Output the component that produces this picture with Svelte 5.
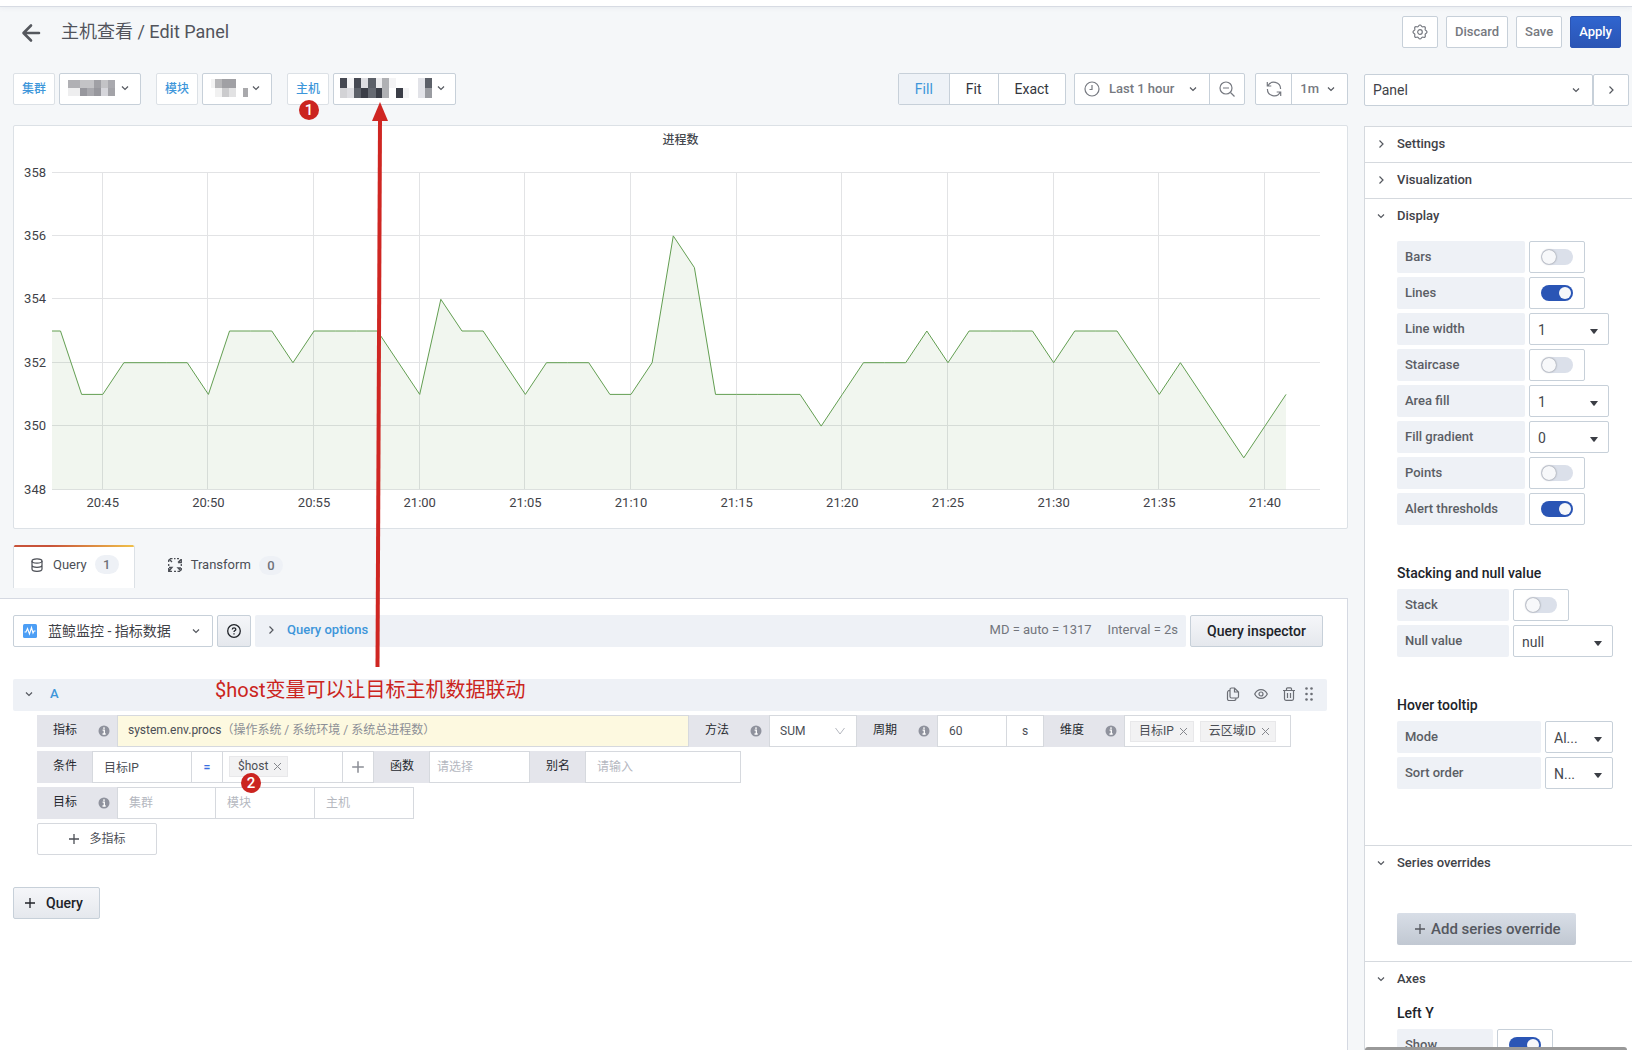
<script>
  const values = [
    353, 351, 351, 352, 352, 352, 352, 351, 353, 353, 353, 352, 353, 353, 353, 353, 352, 351, 354, 353, 353, 352, 351,
    352, 352, 352, 351, 351, 352, 356, 355, 351, 351, 351, 351, 351, 350, 351, 352, 352, 352, 353, 352, 353, 353, 353,
    353, 352, 353, 353, 353, 352, 351, 352, 351, 350, 349, 350, 351,
  ];
  const times = ['20:45', '20:50', '20:55', '21:00', '21:05', '21:10', '21:15', '21:20', '21:25', '21:30', '21:35', '21:40'];
  const ticks = [358, 356, 354, 352, 350, 348];
  const minute = 21.13;
  const xAt = (m) => 46.5 + m * minute;
  const yAt = (v) => 335.5 - (v - 348) * 31.7;
  const line = '38,' + yAt(353) + ' ' + values.map((v, i) => xAt(i) + ',' + yAt(v)).join(' ');
  const area = '38,335.5 ' + line + ' ' + xAt(values.length - 1) + ',335.5';

  // Redacted values: [x, y, width, height, colour]
  const maskCluster = [
    [0, 1, 12, 8, '#b0b0b4'], [12, 1, 14, 8, '#c3c3c6'], [26, 1, 7, 8, '#a0a0a5'], [33, 1, 7, 8, '#c3c3c6'], [40, 1, 7, 8, '#a9a9ae'],
    [0, 9, 12, 8, '#eeeeef'], [12, 9, 7, 8, '#97979d'], [19, 9, 7, 8, '#a9a9ae'], [26, 9, 7, 8, '#97979d'], [33, 9, 7, 8, '#d6d6db'], [40, 9, 7, 8, '#a3a3a8'],
  ];
  const maskModule = [
    [0, 0, 4, 9, '#f3f3f3'], [4, 0, 7, 9, '#b7b7b9'], [11, 0, 14, 9, '#a0a0a4'],
    [4, 9, 7, 9, '#f1f1f1'], [11, 9, 7, 9, '#cbcbcd'], [18, 9, 7, 9, '#e2e2e3'], [32, 9, 5, 9, '#a9a9ac'],
  ];
  const maskHost = [
    [0, 0, 7, 10, '#464952'], [7, 0, 7, 10, '#f4f4f5'], [14, 0, 7, 10, '#464952'], [21, 0, 7, 10, '#dedee2'], [28, 0, 8, 10, '#5c6068'],
    [36, 0, 6, 10, '#ececee'], [42, 0, 7, 10, '#b0b1b4'], [49, 0, 7, 10, '#f4f4f5'], [78, 0, 7, 10, '#e2e3e8'], [85, 0, 7, 10, '#5c6068'],
    [0, 10, 7, 10, '#d3d3d6'], [7, 10, 7, 10, '#dedee2'], [14, 10, 7, 10, '#5c6068'], [21, 10, 7, 10, '#3b3e47'], [28, 10, 8, 10, '#666a72'],
    [36, 10, 6, 10, '#3b3e47'], [42, 10, 7, 10, '#b0b1b4'], [56, 10, 7, 10, '#3b3e47'], [63, 10, 6, 10, '#f4f4f5'], [78, 10, 7, 10, '#e2e3e8'], [85, 10, 7, 10, '#9a9ca1'],
  ];
  const display = [
    { label: 'Bars', on: false },
    { label: 'Lines', on: true },
    { label: 'Line width', value: '1' },
    { label: 'Staircase', on: false },
    { label: 'Area fill', value: '1' },
    { label: 'Fill gradient', value: '0' },
    { label: 'Points', on: false },
    { label: 'Alert thresholds', on: true },
  ];
  const stacking = [{ label: 'Stack', on: false }, { label: 'Null value', value: 'null' }];
  const hover = [{ label: 'Mode', value: 'Al...' }, { label: 'Sort order', value: 'N...' }];
  const axes = [{ label: 'Show', on: true }];
</script>

{#snippet down()}
  <svg class="chev" width="10" height="10" viewBox="0 0 10 10"><path d="M2 3.5 5 6.5 8 3.5" /></svg>
{/snippet}
{#snippet right()}
  <svg class="chev" width="10" height="10" viewBox="0 0 10 10"><path d="M3.5 1.5 7 5 3.5 8.5" /></svg>
{/snippet}
{#snippet plus(size)}
  <svg width={size} height={size} viewBox="0 0 12 12" fill="none" stroke="currentColor" stroke-width="1.3"><path d="M6 1v10M1 6h10" /></svg>
{/snippet}
{#snippet cross()}
  <svg width="9" height="9" viewBox="0 0 9 9" fill="none" stroke="#85878d"><path d="M1 1l7 7M8 1 1 8" /></svg>
{/snippet}
{#snippet info()}
  <svg class="info" width="12" height="12" viewBox="0 0 12 12"><circle cx="6" cy="6" r="5.5" fill="#8f929d" /><path d="M6 2.2v1.7M4.6 5.2H6.3V8.8M4.5 9h3.2" fill="none" stroke="#fff" stroke-width="1.3" /></svg>
{/snippet}
{#snippet mask(cells, w, h)}
  <svg width={w} height={h} viewBox="0 0 {w} {h}" shape-rendering="crispEdges">
    {#each cells as c}<rect x={c[0]} y={c[1]} width={c[2]} height={c[3]} fill={c[4]} />{/each}
  </svg>
{/snippet}
{#snippet fields(items, kind)}
  <div class="fields {kind}">
    {#each items as f}
      {@const id = kind + '-' + f.label.replaceAll(' ', '-')}
      <div class="field">
        <label for={id}>{f.label}</label>
        {#if f.value}
          <div class="pick">
            <select {id}><option>{f.value}</option></select>
            <svg width="8" height="5" viewBox="0 0 8 5"><path d="M0 0h8L4.6 4.4a.8.8 0 0 1-1.2 0z" fill="#3b3e45" /></svg>
          </div>
        {:else}
          <div class="switch"><input type="checkbox" {id} checked={f.on} /></div>
        {/if}
      </div>
    {/each}
  </div>
{/snippet}

<div class="page">
  <div class="strip"></div>
  <header class="top">
    <button class="back" aria-label="Back">
      <svg width="20" height="20" viewBox="0 0 20 20" fill="none" stroke="#55585e" stroke-width="2.6" stroke-linecap="round" stroke-linejoin="round"><path d="M18 10H3M10 2.500 2.500 10 10 17.500" /></svg>
    </button>
    <h1>主机查看 / Edit Panel</h1>
    <div class="actions">
      <button class="btn gear" aria-label="Panel settings">
        <svg width="16" height="16" viewBox="0 0 16 16" fill="none" stroke="currentColor" stroke-width="1.2" stroke-linejoin="round"><path d="M8 1c1.300 0 1.400 1.500 2.200 1.800.9.300 1.900-.7 2.800.2.900.9-.1 1.900.2 2.800.300.8 1.800.9 1.800 2.200s-1.500 1.400-1.800 2.200c-.3.900.7 1.900-.2 2.800-.9.900-1.900-.1-2.800.2C9.400 13.500 9.300 15 8 15s-1.400-1.500-2.200-1.800c-.9-.3-1.900.7-2.800-.2-.9-.9.1-1.900-.2-2.800C2.500 9.400 1 9.300 1 8s1.500-1.400 1.800-2.200c.3-.9-.7-1.900.2-2.800.9-.9 1.900.1 2.800-.2C6.600 2.500 6.700 1 8 1z" /><circle cx="8" cy="8" r="2.300" /></svg>
      </button>
      <button class="btn">Discard</button>
      <button class="btn">Save</button>
      <button class="btn primary">Apply</button>
    </div>
  </header>

  <div class="body">
    <main>
      <div class="toolbar">
        <div class="var"><span class="name">集群</span><button class="btn dark" aria-label="集群">{@render mask(maskCluster, 47, 18)}{@render down()}</button></div>
        <div class="var"><span class="name">模块</span><button class="btn dark module" aria-label="模块">{@render mask(maskModule, 37, 18)}{@render down()}</button></div>
        <div class="var"><span class="name">主机<i class="dot">1</i></span><button class="btn dark host" aria-label="主机">{@render mask(maskHost, 92, 20)}{@render down()}</button></div>
        <div class="group size">
          <button class="on">Fill</button><button>Fit</button><button>Exact</button>
        </div>
        <div class="group time">
          <button class="range">
            <svg width="16" height="16" viewBox="0 0 16 16" fill="none" stroke="currentColor" stroke-width="1.2"><circle cx="8" cy="8" r="7" /><path d="M8 4v4.500H5.500" /></svg>
            <span>Last 1 hour</span>{@render down()}
          </button><button class="icon" aria-label="Zoom out">
            <svg width="16" height="16" viewBox="0 0 16 16" fill="none" stroke="currentColor" stroke-width="1.2"><circle cx="7" cy="7" r="6" /><path d="M4 7h6M11.500 11.500l4 4" /></svg>
          </button>
        </div>
        <div class="group refresh">
          <button class="icon" aria-label="Refresh">
            <svg width="16" height="16" viewBox="0 0 16 16" fill="none" stroke="currentColor" stroke-width="1.200"><path d="M1.300 1v4h4M14.700 15v-4h-4M1.700 5A6.800 6.800 0 0 1 14.600 8M14.300 11A6.800 6.800 0 0 1 1.400 8" /></svg>
          </button><button class="every"><span>1m</span>{@render down()}</button>
        </div>
      </div>

      <section class="chart">
        <h2>进程数</h2>
        <svg viewBox="0 0 1333 374">
          <g class="grid">
            {#each ticks as t}<line x1="38" x2="1306" y1={Math.round(yAt(t)) - 0.5} y2={Math.round(yAt(t)) - 0.5} />{/each}
            {#each times as t, i}<line x1={Math.round(xAt(2 + i * 5)) - 0.5} x2={Math.round(xAt(2 + i * 5)) - 0.5} y1="18" y2="335" />{/each}
          </g>
          <polygon points={area} fill="#629e51" fill-opacity="0.09" />
          <polyline points={line} fill="none" stroke="#629e51" />
          {#each ticks as t}<text x="32" y={yAt(t) + 4} text-anchor="end">{t}</text>{/each}
          {#each times as t, i}<text x={xAt(2 + i * 5)} y="353" text-anchor="middle">{t}</text>{/each}
        </svg>
      </section>

      <nav class="tabs">
        <button class="tab active">
          <svg width="14" height="14" viewBox="0 0 14 14" fill="none" stroke="currentColor" stroke-width="1.200"><ellipse cx="7" cy="3" rx="5" ry="2.200" /><path d="M2 3v8c0 1.300 2.200 2.300 5 2.300s5-1 5-2.300V3M2 7c0 1.300 2.200 2.300 5 2.300S12 8.300 12 7" /></svg>
          <span>Query</span><b>1</b>
        </button>
        <button class="tab">
          <svg width="14" height="14" viewBox="0 0 14 14" fill="none" stroke="currentColor" stroke-width="1.300"><path d="M.7 4V1.700M4.500.7H2M1 1l3 3M9 .7h2M13.300 1v3.500H10M13 1.500 10 4.500M.7 10v3.300H4M1 13l3-3.500H1M13.300 10v2.300M9.500 13.300H12M13 13l-3-3h3M.7 6v2M6 .7h1.500M6 13.300h2M13.300 6v2" /></svg>
          <span>Transform</span><b>0</b>
        </button>
      </nav>

      <section class="query">
        <div class="source">
          <button class="btn ds">
            <svg width="14" height="14" viewBox="0 0 14 14"><rect width="14" height="14" rx="1.500" fill="#4c9ef5" /><path d="M1.500 8H3l1.500-3.500L6.500 10l2-6.500L10 9l1-2h1.500" fill="none" stroke="#fff" stroke-width="1.100" /></svg>
            <span>蓝鲸监控 - 指标数据</span>{@render down()}
          </button>
          <button class="btn soft help" aria-label="Help">
            <svg width="14" height="14" viewBox="0 0 14 14" fill="none" stroke="currentColor" stroke-width="1.300"><circle cx="7" cy="7" r="6.300" /><path d="M5.300 5.600c0-2.300 3.500-2.200 3.500-.2C8.800 6.600 7 6.600 7 8M7 9.200v1.300" /></svg>
          </button>
          <div class="options">
            {@render right()}
            <button class="link">Query options</button>
            <span class="meta">MD = auto = 1317</span>
            <span>Interval = 2s</span>
          </div>
          <button class="btn soft inspect">Query inspector</button>
        </div>

        <div class="rowhead">
          {@render down()}
          <span class="ref">A</span>
          <div class="tools">
            <button aria-label="Duplicate"><svg width="14" height="14" viewBox="0 0 14 14" fill="none" stroke="currentColor" stroke-width="1.200"><path d="M8.500 1H5.500A1.500 1.500 0 0 0 4 2.500v7A1.500 1.500 0 0 0 5.500 11h5.500A1.500 1.500 0 0 0 12.500 9.500V5zM8.500 1v4h4M4 3.500A2 2 0 0 0 1.500 5.500V12a1.500 1.500 0 0 0 1.500 1.500H8a2 2 0 0 0 2-2" /></svg></button>
            <button aria-label="Toggle visibility"><svg width="14" height="14" viewBox="0 0 14 14" fill="none" stroke="currentColor" stroke-width="1.200"><path d="M.7 7C3.500 1.200 10.500 1.200 13.300 7 10.500 12.800 3.500 12.800.7 7z" /><circle cx="7" cy="7" r="2" /></svg></button>
            <button aria-label="Delete"><svg width="14" height="14" viewBox="0 0 14 14" fill="none" stroke="currentColor" stroke-width="1.200"><path d="M1 3.500h12M4.500 3.500V1.800q0-1 1-1h3q1 0 1 1v1.700M2.500 3.500v8.300q0 1.500 1.500 1.500h6q1.500 0 1.500-1.500V3.500M5.500 6v5M8.500 6v5" /></svg></button>
            <button aria-label="Move"><svg width="10" height="14" viewBox="0 0 10 14" fill="currentColor"><circle cx="2.500" cy="1.500" r="1.300" /><circle cx="7.500" cy="1.500" r="1.300" /><circle cx="2.500" cy="7" r="1.300" /><circle cx="7.500" cy="7" r="1.300" /><circle cx="2.500" cy="12.500" r="1.300" /><circle cx="7.500" cy="12.500" r="1.300" /></svg></button>
          </div>
        </div>

        <div class="lines">
          <div class="line">
            <span class="cap wide">指标{@render info()}</span>
            <div class="cell metric"><span>system.env.procs</span><em>（操作系统 / 系统环境 / 系统总进程数）</em></div>
            <label class="cap wide" for="method">方法{@render info()}</label>
            <div class="cell method">
              <select id="method"><option>SUM</option></select>
              <svg width="10" height="8" viewBox="0 0 10 8" fill="none" stroke="#b4b7bf"><path d="M.5 1 5 7 9.500 1" /></svg>
            </div>
            <label class="cap wide" for="period">周期{@render info()}</label>
            <input class="cell period" id="period" value="60" />
            <span class="cell unit">s</span>
            <span class="cap wide">维度{@render info()}</span>
            <div class="cell dims">
              <span class="tag">目标IP {@render cross()}</span>
              <span class="tag">云区域ID {@render cross()}</span>
            </div>
          </div>
          <div class="line">
            <label class="cap" for="cond">条件</label>
            <input class="cell first" id="cond" value="目标IP" />
            <button class="cell eq">=</button>
            <div class="cell cond"><span class="tag">$host {@render cross()}<i class="dot">2</i></span></div>
            <button class="cell add" aria-label="添加条件">{@render plus(14)}</button>
            <label class="cap" for="fn">函数</label>
            <input class="cell fn" id="fn" placeholder="请选择" />
            <label class="cap" for="alias">别名</label>
            <input class="cell alias" id="alias" placeholder="请输入" />
          </div>
          <div class="line">
            <label class="cap wide" for="t1">目标{@render info()}</label>
            <input class="cell mid" id="t1" placeholder="集群" />
            <input class="cell mid" placeholder="模块" aria-label="模块" />
            <input class="cell mid" placeholder="主机" aria-label="主机" />
          </div>
          <button class="btn more">{@render plus(12)}多指标</button>
        </div>
        <button class="btn soft addq">{@render plus(12)}Query</button>
      </section>
    </main>

    <aside>
      <div class="panelpick">
        <button class="btn what"><span>Panel</span>{@render down()}</button>
        <button class="btn go" aria-label="Collapse">{@render right()}</button>
      </div>
      <div class="groups">
        <section><button class="head">{@render right()}Settings</button></section>
        <section><button class="head">{@render right()}Visualization</button></section>
        <section class="open">
          <button class="head">{@render down()}Display</button>
          {@render fields(display, 'display')}
          <h3>Stacking and null value</h3>
          {@render fields(stacking, 'stacking')}
          <h3>Hover tooltip</h3>
          {@render fields(hover, 'hover')}
        </section>
        <section class="over">
          <button class="head">{@render down()}Series overrides</button>
          <button class="btn series">{@render plus(12)}Add series override</button>
        </section>
        <section>
          <button class="head">{@render down()}Axes</button>
          <h3 class="lead">Left Y</h3>
          {@render fields(axes, 'axes')}
        </section>
      </div>
      <div class="scroll"></div>
    </aside>
  </div>

  <svg class="arrow" width="24" height="566" viewBox="0 0 24 566">
    <path d="M14 18 11.500 565" stroke="#cf2622" stroke-width="4" /><path d="M14 0 22 19H6z" fill="#cf2622" />
  </svg>
  <p class="note">$host变量可以让目标主机数据联动</p>
</div>

<style>
  :global(body) { background: #f5f7f9; }
  .page, .page * { box-sizing: border-box; }
  .page {
    position: relative;
    display: flex;
    flex-direction: column;
    height: 100vh;
    overflow: hidden;
    font: 13px/20px Roboto, "Noto Sans CJK SC", sans-serif;
    color: #45484e;
    background: #f5f7f9;
  }
  button, input, select { font: inherit; color: inherit; margin: 0; }
  button { display: flex; align-items: center; padding: 0; border: 0; background: none; white-space: nowrap; }
  svg { display: block; flex: none; }
  h1, h2, h3, p { margin: 0; }
  .chev { fill: none; stroke: #55585f; stroke-width: 1.2; }
  .strip { flex: none; height: 7px; background: #fff; border-bottom: 1px solid #d7dbe3; box-shadow: 0 1px 4px #d7dbe366; }

  .top { flex: none; display: flex; align-items: center; height: 50px; padding: 0 11px 0 21px; }
  .back { padding-top: 2px; }
  h1 { margin-left: 20px; font-size: 18px; line-height: 24px; font-weight: 400; color: #52545c; }
  .actions { display: flex; gap: 8px; margin-left: auto; }
  .btn {
    height: 32px;
    padding: 0 8px;
    border: 1px solid #c7d0d9;
    border-radius: 2px;
    background: #fff;
    font-weight: 500;
    color: #767980;
  }
  .gear { width: 36px; justify-content: center; padding: 0; }
  .primary { border-color: #2b55b5; background: linear-gradient(#3065cf, #2b55b5); color: #fff; }

  .body { flex: 1; display: flex; gap: 16px; min-height: 0; }
  main { flex: 1; display: flex; flex-direction: column; min-width: 0; }
  .toolbar { display: flex; padding: 16px 0 0 13px; }
  .var { display: flex; gap: 4px; margin-right: 15px; }
  .name {
    position: relative;
    height: 32px;
    padding: 0 8px;
    border: 1px solid #dce1e6;
    border-radius: 2px;
    background: #fff;
    font-size: 12px;
    line-height: 30px;
    font-weight: 500;
    color: #3d96da;
  }
  .dot {
    position: absolute;
    left: 11px;
    top: 26px;
    width: 20px;
    height: 20px;
    border-radius: 50%;
    background: #cb2420;
    color: #fff;
    font: 500 15px/20px Roboto, sans-serif;
    text-align: center;
  }
  .dark { gap: 5px; padding: 0 10px 3px 8px; }
  .module { gap: 3px; }
  .host { gap: 4px; padding: 0 9px 3px 6px; }
  .group { display: flex; height: 32px; border: 1px solid #c7d0d9; border-radius: 2px; background: #fff; color: #767980; font-weight: 500; }
  .group button { height: 30px; }
  .group button + button { border-left: 1px solid #c7d0d9; }
  .size { margin: 0 8px 0 auto; color: #33363d; font-size: 14px; font-weight: 400; }
  .size button { padding: 0 16px; }
  .size .on { background: #eef2f7; color: #3d96da; }
  .time { margin-right: 10px; }
  .range { gap: 9px; padding: 0 11px 0 9px; }
  .range .chev { margin-left: 5px; }
  .icon { width: 35px; justify-content: center; }
  .every { gap: 7px; padding: 0 11px 0 8px; }

  .chart { margin: 20px 0 0 13px; border: 1px solid #dce1e6; border-radius: 2px; background: #fff; }
  h2 { height: 28px; font-size: 12px; line-height: 28px; font-weight: 500; text-align: center; }
  .chart svg { width: 100%; height: auto; }
  .grid line { stroke: #e2e3e5; }
  .chart text { font-size: 13px; fill: #3f4248; }

  .tabs { display: flex; margin: 16px 0 10px 13px; }
  .tab { height: 43px; padding: 1px 16px 4px; border: 1px solid transparent; color: #4b4e55; }
  .tab span { margin: 0 8px 0 9px; }
  .tab b { width: 24px; height: 19px; border-radius: 10px; background: #eef1f6; font-weight: 500; line-height: 19px; color: #70737a; }
  .tab.active {
    margin-right: 16px;
    padding: 0 15px 4px 16px;
    border: solid #dce1e6;
    border-width: 0 1px;
    border-radius: 2px 2px 0 0;
    background: linear-gradient(90deg, #c8533a 30%, #f0c04a) top / 100% 2px no-repeat, #fff;
  }

  .query { flex: 1; min-height: 0; padding: 16px 20px 0 13px; border: 1px solid #d5d9e2; border-width: 1px 1px 0 0; background: #fff; }
  .source { display: flex; gap: 4px; padding-right: 4px; }
  .ds { width: 200px; padding: 0 11px 0 9px; font-size: 14px; font-weight: 400; color: #3f4248; }
  .ds span { margin: 0 auto 0 11px; }
  .soft { background: linear-gradient(#f5f6f9, #e5e8ed); color: #202329; }
  .help { width: 34px; justify-content: center; }
  .options { flex: 1; display: flex; align-items: center; padding: 0 8px 3px 11px; border-radius: 2px; background: #eef1f6; color: #72757c; }
  .link { margin-left: 11px; color: #3d96da; font-weight: 500; }
  .meta { margin: 0 16px 0 auto; }
  .inspect { padding: 0 16px; font-size: 14px; }

  .rowhead { display: flex; align-items: center; height: 32px; margin-top: 32px; padding: 0 13px 2px 11px; border-radius: 2px; background: #eef1f6; }
  .ref { margin-left: 16px; color: #3d96da; font-weight: 500; }
  .tools { display: flex; gap: 14px; margin-left: auto; color: #6c6f76; }
  .tools button:last-child { margin-left: -6px; }

  .lines { display: flex; flex-direction: column; align-items: flex-start; gap: 4px; padding: 4px 0 0 24px; font-size: 12px; }
  .line { display: flex; height: 32px; color: #4b4e55; }
  .cap { display: flex; align-items: center; justify-content: space-between; padding: 0 15px 2px 16px; background: #e4e5eb; color: #26292f; }
  .wide { width: 80px; padding-right: 7px; }
  .info { margin-top: 2px; }
  .cell { display: flex; align-items: center; height: 32px; border: 1px solid #d6d9de; border-radius: 0; background: #fff; outline: 0; }
  .cell + .cell { border-left: 0; }
  .cell::placeholder { color: #b5b8bf; }
  .metric { width: 572px; padding: 0 10px 3px; background: #fdf9e0; }
  em { font-style: normal; color: #8c8f96; }
  .method { width: 88px; padding: 0 11px 0 0; }
  .method select { flex: 1; height: 30px; padding: 0 0 0 10px; border: 0; background: none; appearance: none; }
  .period { width: 70px; padding: 0 11px; }
  .unit { width: 37px; justify-content: center; }
  .dims { width: 167px; gap: 6px; padding: 0 5px; }
  .tag { position: relative; display: flex; align-items: center; gap: 5px; height: 21px; padding: 0 5px 0 8px; border: 1px solid #e8e8ea; background: #f2f2f3; }
  .mid { width: 99px; padding: 0 11px 1px; }
  .first { width: 100px; padding: 0 11px 1px; }
  .fn { width: 101px; padding: 0 7px 1px; }
  .eq { width: 31px; justify-content: center; color: #3a6fe0; font-weight: 700; }
  .cond { width: 120px; padding: 0 6px 2px; }
  .cond .dot { top: 16px; }
  .add { width: 31px; justify-content: center; color: #8c8f96; }
  .alias { width: 156px; padding: 0 11px 1px; }
  .more { width: 120px; gap: 9px; justify-content: center; border-color: #d6d9de; font-weight: 400; color: #4b4e55; }
  .addq { gap: 10px; margin-top: 32px; padding: 0 16px 0 10px; font-size: 14px; }

  aside { position: relative; display: flex; flex-direction: column; width: 268px; padding-top: 17px; }
  .panelpick { flex: none; display: flex; padding-right: 3px; }
  .what { flex: 1; justify-content: space-between; padding: 0 11px 0 8px; font-size: 14px; font-weight: 400; color: #3f4248; }
  .go { width: 36px; justify-content: center; }
  .groups { flex: 1; min-height: 0; overflow: hidden; margin-top: 20px; border-left: 1px solid #d5d9de; background: #fff; }
  .groups section { border-top: 1px solid #d5d9de; }
  .head { width: 100%; height: 35px; gap: 11px; padding: 0 0 2px 11px; font-weight: 500; color: #3f4248; }
  .open { padding-bottom: 56px; }
  .over { padding-bottom: 16px; }
  .series { margin: 32px 0 0 32px; padding: 0 15px 0 17px; gap: 5px; border: 0; background: linear-gradient(#d8dee7, #c1c8d2); font-size: 15px; color: #55585f; }
  h3 { margin: 36px 0 4px 32px; font-size: 14px; line-height: 24px; font-weight: 500; color: #202329; }
  h3.lead { margin-top: 4px; }
  .fields { display: flex; flex-direction: column; gap: 4px; padding-left: 32px; }
  .display { padding-top: 7px; }
  .field { display: flex; gap: 4px; height: 32px; }
  .field label { width: 128px; padding: 0 8px; border-radius: 2px; background: #eef1f6; line-height: 32px; font-weight: 500; color: #5b5e65; }
  .stacking label { width: 112px; }
  .hover label { width: 144px; }
  .axes label { width: 96px; }
  .switch { display: flex; align-items: center; justify-content: center; width: 56px; border: 1px solid #c7d0d9; border-radius: 2px; }
  .switch input { appearance: none; width: 32px; height: 16px; padding: 1px; border-radius: 8px; background: #dbe0ea; }
  .switch input::before { content: ""; display: block; width: 14px; height: 14px; border-radius: 50%; background: #f7f8fa; box-shadow: 0 0 2px #6c7078; }
  .switch input:checked { background: #2a55b5; }
  .switch input:checked::before { width: 12px; height: 12px; margin: 1px 0 0 17px; box-shadow: none; }
  .pick { display: flex; align-items: center; width: 80px; padding-right: 10px; border: 1px solid #c7d0d9; border-radius: 2px; }
  .pick select { flex: 1; min-width: 0; height: 30px; padding: 2px 0 0 8px; border: 0; background: none; appearance: none; font-size: 14px; outline: 0; }
  .pick svg { margin-top: 4px; }
  .stacking .pick { width: 100px; }
  .hover .pick { width: 68px; }
  .scroll { position: absolute; left: 1px; right: 5px; bottom: 0; height: 3px; border-radius: 3px 3px 0 0; background: #999; }

  .arrow { position: absolute; left: 366px; top: 102px; }
  .note { position: absolute; left: 215px; top: 678px; font-size: 20px; line-height: 24px; color: #cb2420; }
</style>
